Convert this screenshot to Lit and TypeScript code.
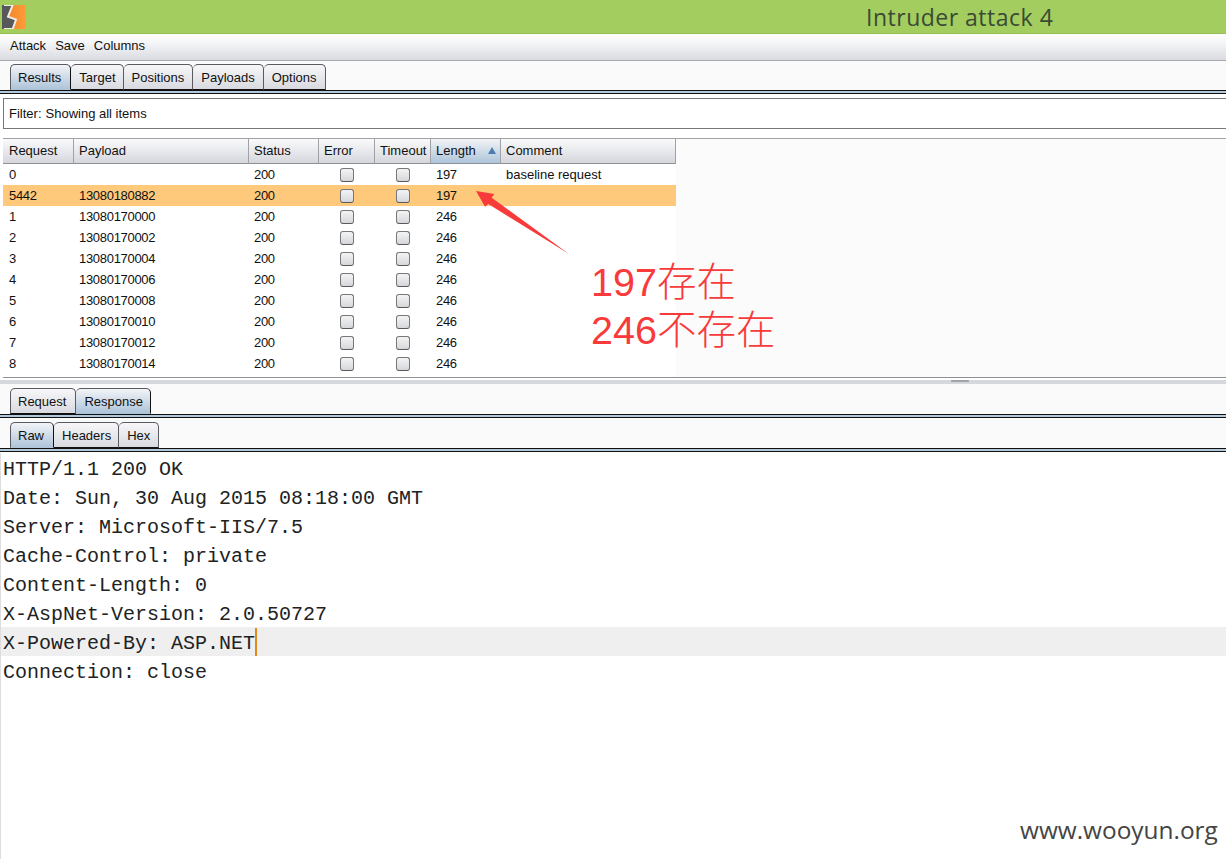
import { LitElement, html, css } from "lit";
import { customElement } from "lit/decorators.js";

const rows: [string, string, string, string, string][] = [
  ["0", "", "200", "197", "baseline request"],
  ["5442", "13080180882", "200", "197", ""],
  ["1", "13080170000", "200", "246", ""],
  ["2", "13080170002", "200", "246", ""],
  ["3", "13080170004", "200", "246", ""],
  ["4", "13080170006", "200", "246", ""],
  ["5", "13080170008", "200", "246", ""],
  ["6", "13080170010", "200", "246", ""],
  ["7", "13080170012", "200", "246", ""],
  ["8", "13080170014", "200", "246", ""],
];
const lines = [
  "HTTP/1.1 200 OK",
  "Date: Sun, 30 Aug 2015 08:18:00 GMT",
  "Server: Microsoft-IIS/7.5",
  "Cache-Control: private",
  "Content-Length: 0",
  "X-AspNet-Version: 2.0.50727",
  "X-Powered-By: ASP.NET",
  "Connection: close",
];

@customElement("app-root")
export class AppRoot extends LitElement {
  static styles = css`
    :host { display: block; width: 1226px; height: 859px; position: relative; overflow: hidden; background: #fff;
      font-family: "Liberation Sans", Arial, sans-serif; font-size: 13px; color: #111; }
    .title { height: 33px; background: #a3cd5f; border-bottom: 1px solid #93bd55; display: flex; position: relative; }
    .logo { margin: 5px 0 0 2px; width: 24px; height: 24px; display: block; }
    .title-text { position: absolute; left: 866px; top: 3px; font-family: "Open Sans", sans-serif; font-size: 23px; line-height: 28px; color: #3a4a35; letter-spacing: 0.5px; }
    .menu { height: 27px; box-sizing: border-box; background: linear-gradient(#fdfdfd, #f6f7f8 30%, #d9dbe1); border-bottom: 1px solid #a9a9ad; display: flex; align-items: center; gap: 9px; padding: 0 0 3px 10px; }
    .tabs { display: flex; align-items: flex-end; padding-left: 10px; height: 30px; box-sizing: border-box; background: #fafafb; }
    .tabs.top { height: 29px; }
    .tab { height: 26px; box-sizing: border-box; padding: 0 8px; display: flex; align-items: center; border: 1px solid #5a5a60; border-bottom: 1px solid #111; border-left-width: 0; border-radius: 5px 5px 0 0;
      background: linear-gradient(#f7f7f9, #d8dae0); }
    .tab:first-child { border-left-width: 1px; padding: 0 9px 0 7px; }
    .tab:nth-child(2) { padding-right: 7px; }
    .tab.on { background: linear-gradient(#f2f4f7, #aec4d9); border-color: #5a5a60 #111 #aec4d9 #5a5a60; }
    .rule { height: 4px; box-sizing: border-box; border-top: 1px solid #111; border-bottom: 1px solid #111; background: #b4c8dc; }
    .filter { height: 31px; box-sizing: border-box; margin: 4px 0 0 3px; border: 1px solid #77777a; border-right: 0; display: flex; align-items: center; padding-left: 5px; background: #fff; gap: 4px; }
    .tablewrap { margin: 9px 0 0 3px; height: 240px; box-sizing: border-box; border: 1px solid #a0a0a5; border-right: 0; border-bottom-color: #8e8e95; background: #fbfbfc; }
    .grid { width: 673px; margin-left: -1px; display: grid; grid-template-columns: 71px 175px 70px 56px 56px 70px 175px; }
    .grid > .r { display: contents; }
    .th { height: 25px; box-sizing: border-box; padding: 0 0 2px 5px; display: flex; align-items: center; justify-content: space-between; background: linear-gradient(#fafafb, #d5d7dd); border-right: 1px solid #a0a2a8; border-bottom: 1px solid #8e9096; white-space: nowrap; }
    .th:first-child { padding-left: 6px; }
    .th.sorted { background: linear-gradient(#f2f4f7, #aec4d9); padding-right: 4px; }
    .th:last-child { border-right: 0; }
    .sort { width: 0; height: 0; border: 4px solid transparent; border-top: 0; border-bottom: 7px solid #4d7eb0; }
    .td { height: 21px; padding-left: 5px; background: #fff; display: flex; align-items: center; box-sizing: border-box; white-space: nowrap; }
    .td:first-child { padding-left: 6px; }
    .td.n { letter-spacing: -0.3px; }
    .td.c { padding-left: 0; justify-content: center; }
    .hi .td { background: #ffc97c; }
    .cb { width: 14px; height: 14px; box-sizing: border-box; border: 1px solid #77777a; border-bottom-color: #58585c; border-radius: 3px; background: linear-gradient(#f4f4f5, #d6d7da); }
    .pad { height: 3px; grid-column: 1 / -1; background: #fff; }
    .split { height: 4px; background: #d5d8dd; margin-top: 2px; position: relative; }
    .grip { position: absolute; left: 951px; top: 0; width: 18px; height: 2px; background: #a2a4aa; border-radius: 1px 1px 0 0; }
    .body { height: 407px; margin-top: 1px; font-family: "Liberation Mono", monospace; font-size: 20px; color: #222; border-left: 1px solid #ddd; }
    .line { height: 29px; box-sizing: border-box; padding: 2px 0 0 2px; line-height: 29px; white-space: pre; display: flex; }
    .line.cur { background: #efefef; }
    .caret { width: 2px; height: 28px; background: #e08a1e; margin-top: -1px; }
    .arrow { position: absolute; left: 470px; top: 180px; width: 110px; height: 80px; }
    .note { position: absolute; left: 591px; top: 258px; color: #f83a3a; font-family: "Liberation Sans", "Noto Sans CJK SC", sans-serif; font-size: 39.5px; line-height: 48px; white-space: nowrap; font-weight: 300; }
    .mark { position: absolute; left: 1020px; top: 813px; font-family: "Open Sans", sans-serif; font-size: 24.4px; line-height: 34px; color: #444; }
  `;

  private tabs(names: string[], on: number, cls = "") {
    return html`<div class="tabs ${cls}">${names.map((n, i) => html`<div class="tab ${i === on ? "on" : ""}">${n}</div>`)}</div>`;
  }

  render() {
    return html`
      <div class="title">
        <svg class="logo" viewBox="0 0 24 24">
          <defs><linearGradient id="o" x1="0" x2="1" y1="0" y2="0"><stop offset="0.4" stop-color="#f58a2c"/><stop offset="1" stop-color="#ff9d3a"/></linearGradient></defs>
          <rect width="24" height="24" fill="url(#o)"/>
          <path d="M0 0 H10.7 L6 11.7 L14 14.5 L10.7 24 H0 Z" fill="#58585b" stroke="#efece6" stroke-width="2"/>
          <path d="M1 0 V24" stroke="#58585b" stroke-width="2"/>
        </svg>
        <span class="title-text">Intruder attack 4</span>
      </div>
      <div class="menu"><span>Attack</span><span>Save</span><span>Columns</span></div>
      ${this.tabs(["Results", "Target", "Positions", "Payloads", "Options"], 0, "top")}
      <div class="rule"></div>
      <div class="filter"><span>Filter:</span><span>Showing all items</span></div>
      <div class="tablewrap">
        <div class="grid">
          <div class="th">Request</div><div class="th">Payload</div><div class="th">Status</div>
          <div class="th">Error</div><div class="th">Timeout</div>
          <div class="th sorted"><span>Length</span><span class="sort"></span></div><div class="th">Comment</div>
          ${rows.map((r, i) => html`<div class="r ${i === 1 ? "hi" : ""}">
            <div class="td n">${r[0]}</div><div class="td n">${r[1]}</div><div class="td n">${r[2]}</div>
            <div class="td c"><span class="cb"></span></div><div class="td c"><span class="cb"></span></div>
            <div class="td n">${r[3]}</div><div class="td">${r[4]}</div>
          </div>`)}
          <div class="pad"></div>
        </div>
      </div>
      <div class="split"><div class="grip"></div></div>
      ${this.tabs(["Request", "Response"], 1)}
      <div class="rule"></div>
      ${this.tabs(["Raw", "Headers", "Hex"], 0)}
      <div class="rule"></div>
      <div class="body">
        ${lines.map((l, i) => html`<div class="line ${i === 6 ? "cur" : ""}">${l}${i === 6 ? html`<span class="caret"></span>` : ""}</div>`)}
      </div>
      <svg class="arrow" viewBox="0 0 110 80">
        <path d="M6 11 L24.3 14 L21.7 17.7 L99 74 L18.3 24 L15 26.7 Z" fill="#f83a3a"/>
      </svg>
      <div class="note">197存在<br />246不存在</div>
      <div class="mark">www.wooyun.org</div>
    `;
  }
}
